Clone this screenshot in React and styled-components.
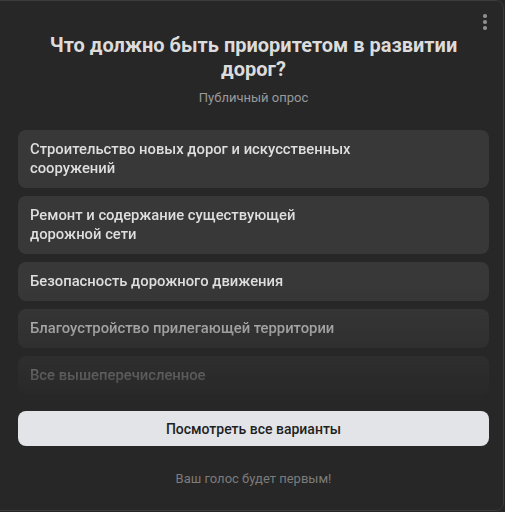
import styled, { createGlobalStyle } from "styled-components";

const GlobalStyle = createGlobalStyle`
    html, body {
        margin: 0;
        padding: 0;
        background: #262626;
        overflow: hidden;
    }
    body {
        font-family: Roboto, "Noto Sans", "Liberation Sans", sans-serif;
    }
`;

const Card = styled.div`
    position: relative;
    box-sizing: border-box;
    width: 513px;
    height: 511px;
    margin-left: -9px;
    background: #272727;
    border: 1px solid #3b3b3b;
    border-radius: 8px;
    padding: 32px 14px 0 26px;
    display: flex;
    flex-direction: column;
`;

const MenuButton = styled.button`
    position: absolute;
    top: 11px;
    right: 8px;
    width: 20px;
    height: 20px;
    padding: 0;
    border: none;
    background: transparent;
    display: flex;
    flex-direction: column;
    align-items: center;
    justify-content: center;
    gap: 2.5px;
    cursor: pointer;
`;

const Dot = styled.span`
    width: 3.5px;
    height: 3.5px;
    border-radius: 50%;
    background: #8e8e8e;
`;

const Title = styled.h1`
    margin: 0;
    font-size: 20px;
    line-height: 24px;
    font-weight: 700;
    color: #dcdcdc;
    text-align: center;
    padding: 0 24px;
`;

const Subtitle = styled.div`
    margin-top: 9px;
    font-size: 13px;
    line-height: 16px;
    color: #9a9a9a;
    text-align: center;
`;

const OptionList = styled.div`
    margin-top: 24px;
    display: flex;
    flex-direction: column;
    gap: 8px;
    -webkit-mask-image: linear-gradient(to bottom, #000 0, #000 60%, rgba(0, 0, 0, 0.12) 100%);
    mask-image: linear-gradient(to bottom, #000 0, #000 60%, rgba(0, 0, 0, 0.12) 100%);
`;

const Option = styled.div`
    box-sizing: border-box;
    background: #383838;
    border-radius: 8px;
    padding: 10px 12px;
    min-height: 38px;
    display: flex;
    align-items: center;
    cursor: pointer;
`;

const OptionText = styled.span`
    max-width: 336px;
    font-size: 14.8px;
    line-height: 19px;
    font-weight: 500;
    color: #dedede;
`;

const ShowAllButton = styled.button`
    margin-top: 16px;
    height: 35px;
    border: none;
    border-radius: 8px;
    background: #e3e4e8;
    color: #1f1f1f;
    font-family: inherit;
    font-size: 14px;
    font-weight: 500;
    cursor: pointer;
`;

const Footer = styled.div`
    margin-top: 25px;
    font-size: 13px;
    line-height: 16px;
    color: #7c7c7c;
    text-align: center;
`;

const options = [
    "Строительство новых дорог и искусственных сооружений",
    "Ремонт и содержание существующей дорожной сети",
    "Безопасность дорожного движения",
    "Благоустройство прилегающей территории",
    "Все вышеперечисленное",
];

export default function App() {
    return (
        <>
            <GlobalStyle />
            <Card>
                <MenuButton aria-label="menu">
                    <Dot />
                    <Dot />
                    <Dot />
                </MenuButton>
                <Title>Что должно быть приоритетом в развитии дорог?</Title>
                <Subtitle>Публичный опрос</Subtitle>
                <OptionList>
                    {options.map((text) => (
                        <Option key={text}>
                            <OptionText>{text}</OptionText>
                        </Option>
                    ))}
                </OptionList>
                <ShowAllButton>Посмотреть все варианты</ShowAllButton>
                <Footer>Ваш голос будет первым!</Footer>
            </Card>
        </>
    );
}
